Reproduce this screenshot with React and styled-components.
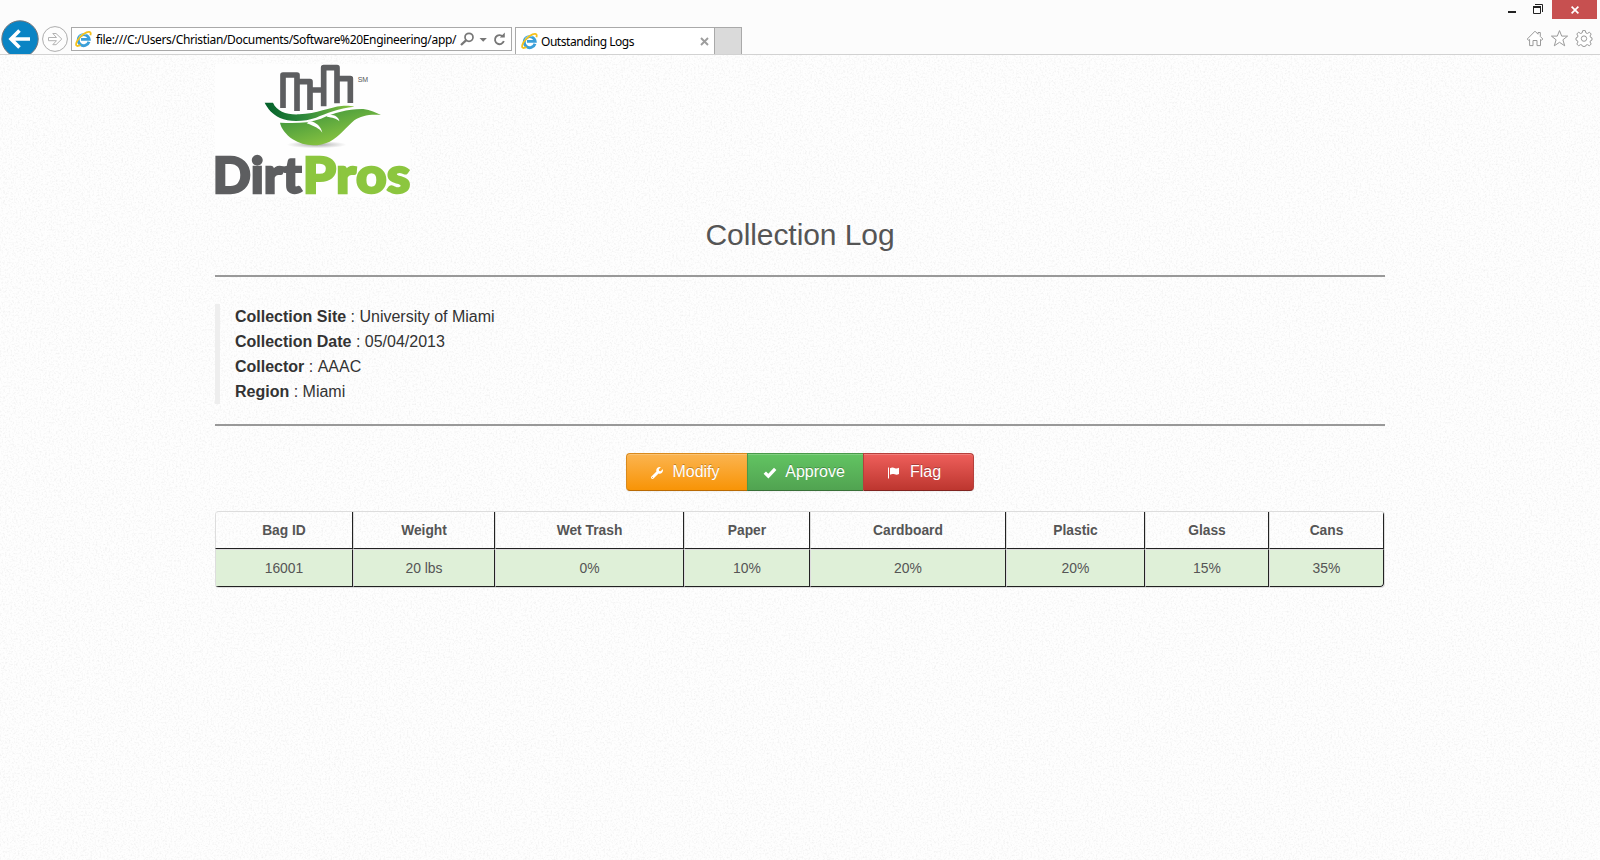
import React from "react";
import styled, { createGlobalStyle } from "styled-components";
import { FaWrench } from "react-icons/fa";

const GlobalStyle = createGlobalStyle`
  * { box-sizing: border-box; }
  body { margin: 0; background: #fdfdfd; overflow: hidden; }
`;

const Window = styled.div`
  width: 1600px;
  height: 860px;
  display: flex;
  flex-direction: column;
  overflow: hidden;
  font-family: "Liberation Sans", Arial, sans-serif;
`;

/* ---------- browser chrome ---------- */

const Chrome = styled.header`
  height: 55px;
  flex: none;
  background: #fcfcfc;
  border-bottom: 1px solid #d2d2d2;
  display: flex;
  align-items: flex-start;
  overflow: hidden;
  font-family: "Noto Sans", "Open Sans", sans-serif;
  font-size: 12px;
  color: #000;
`;

const NavButtons = styled.svg`
  flex: none;
  display: block;
  width: 71px;
  height: 54px;
`;

const AddressBar = styled.div`
  flex: none;
  width: 441px;
  height: 24px;
  margin-top: 27px;
  border: 1px solid #a9a9a9;
  background: #fff;
  display: flex;
  align-items: center;
  padding-left: 3px;
`;

const Url = styled.span`
  flex: none;
  width: 362px;
  margin-left: 4px;
  padding-top: 1px;
  white-space: nowrap;
  line-height: 22px;
  letter-spacing: ${(p) => p.$tracking}px;
`;

const AddressIcons = styled.svg`
  flex: none;
  width: 54px;
  height: 22px;
`;

const Tab = styled.div`
  flex: none;
  width: 200px;
  height: 27px;
  margin: 27px 0 0 3px;
  border: 1px solid #a9a9a9;
  border-bottom: 0;
  background: #fff;
  display: flex;
  align-items: center;
  padding: 0 5px 0 5px;
`;

const TabTitle = styled.span`
  flex: 1;
  margin-left: 3px;
  padding-top: 2px;
  line-height: 24px;
  letter-spacing: ${(p) => p.$tracking}px;
`;

const NewTab = styled.div`
  flex: none;
  width: 27px;
  height: 27px;
  margin-top: 27px;
  background: #dadada;
  border: 1px solid #a9a9a9;
  border-width: 1px 1px 0 0;
`;

const WindowTools = styled.div`
  margin-left: auto;
  width: 100px;
  display: flex;
  flex-direction: column;
`;

const WindowControls = styled.div`
  display: flex;
  height: 19px;
`;

const ControlIcons = styled.svg`
  flex: none;
  width: 52px;
  height: 19px;
`;

const CloseButton = styled.div`
  width: 45px;
  height: 19px;
  background: #c75050;
  display: flex;
  align-items: center;
  justify-content: center;
`;

const ToolIcons = styled.svg`
  width: 100px;
  height: 35px;
`;

const BrandIcon = styled.svg`
  flex: none;
  width: 17px;
  height: 18px;
`;

/* ---------- page ---------- */

const Page = styled.main`
  position: relative;
  flex: 1;
  background: #fefefe;
`;

const Grain = styled.svg`
  position: absolute;
  inset: 0;
  width: 100%;
  height: 100%;
`;

const Container = styled.div`
  position: relative;
  width: 1170px;
  margin: 0 auto;
  padding-top: 9px;
`;

const Logo = styled.svg`
  display: block;
  width: 195px;
  height: 133px;
  background: #fefefe;
  overflow: visible;
`;

const Title = styled.h1`
  margin: 16px 0 0;
  height: 44px;
  line-height: 44px;
  text-align: center;
  font-size: 30px;
  font-weight: 400;
  letter-spacing: ${(p) => p.$tracking}px;
  color: #555;
`;

const Rule = styled.div`
  height: 2px;
  background: #999;
  margin-top: ${(p) => p.$top}px;
`;

const Details = styled.dl`
  margin: 27px 0 0;
  padding-left: 15px;
  border-left: 5px solid #eee;
  color: #333;
  font-size: 16px;
  font-kerning: none;
  line-height: 25px;
`;

const Detail = styled.div`
  height: 25px;
  white-space: pre;
`;

const Term = styled.dt`
  display: inline;
  font-weight: 700;
`;

const Value = styled.dd`
  display: inline;
  margin: 0;
`;

const ButtonGroup = styled.div`
  display: flex;
  justify-content: center;
  margin-top: 27px;
`;

const tones = {
  warning: ["#fbb450", "#f89406", "#d98a1d", "#b96a04"],
  success: ["#62c462", "#51a351", "#4a9a4a", "#387038"],
  danger: ["#ee5f5b", "#bd362f", "#b5403c", "#802420"],
};

const ActionButton = styled.button`
  width: ${(p) => p.$width}px;
  height: 38px;
  padding: 0 ${(p) => p.$inset}px 1px 0;
  display: flex;
  align-items: center;
  justify-content: center;
  gap: ${(p) => p.$gap}px;
  font: 16px "Liberation Sans", Arial, sans-serif;
  color: #fff;
  text-shadow: 0 -1px 0 rgba(0, 0, 0, 0.25);
  background: linear-gradient(${(p) => tones[p.$tone][0]}, ${(p) => tones[p.$tone][1]});
  border: 1px solid ${(p) => tones[p.$tone][2]};
  border-bottom-color: ${(p) => tones[p.$tone][3]};
  border-right-width: ${(p) => (p.$last ? 1 : 0)}px;
  border-radius: ${(p) => (p.$first ? "4px 0 0 4px" : p.$last ? "0 4px 4px 0" : "0")};
  box-shadow: inset 0 1px 0 rgba(255, 255, 255, 0.2), 0 1px 2px rgba(0, 0, 0, 0.05);
  svg { display: block; margin-top: 2px; }
`;

const LogTable = styled.div`
  display: grid;
  grid-template-columns: 138px 142px 189px 126px 196px 139px 124px 115px;
  width: 1170px;
  margin-top: 20px;
  border: 1px solid #ddd;
  border-left-width: 0;
  border-radius: 4px;
  overflow: hidden;
  font-size: 14px;
  color: #555;
`;

const Cell = styled.div`
  height: ${(p) => (p.$head ? 37 : 38)}px;
  line-height: ${(p) => (p.$head ? 37 : 36)}px;
  text-align: center;
  border-left: 1px solid #ddd;
  border-right: 1px solid #222;
  border-bottom: 1px solid #222;
  border-top: ${(p) => (p.$head ? "0" : "1px solid #ddd")};
  font-weight: ${(p) => (p.$head ? 700 : 400)};
  font-size: ${(p) => (p.$head ? 13.8 : 13.9)}px;
  background: ${(p) => (p.$head ? "transparent" : "#dff0d8")};
  background-clip: padding-box;
  &:last-child { border-bottom-right-radius: 4px; }
`;

function IeLogo() {
  return (
    <BrandIcon viewBox="0 0 17 18">
      <path
        d="M14 11.8 A5.5 5.5 0 1 1 14.2 9.4 L6 9.4"
        fill="none"
        stroke="#3a9fd9"
        strokeWidth="2.9"
      />
      <path d="M4 7.6 A5.2 5.2 0 0 1 11.5 4.6" fill="none" stroke="#8fd6f5" strokeWidth="1.2" />
      <path
        d="M15.4 5.2 C16.8 1 13.2 0.8 8.6 4 C3.6 7.6 0 13.2 1.4 15.4 C2 16.4 3.8 16 5.4 15"
        fill="none"
        stroke="#f5c11c"
        strokeWidth="1.8"
      />
    </BrandIcon>
  );
}

function BrowserChrome() {
  return (
    <Chrome>
      <NavButtons viewBox="0 0 71 54">
        <circle cx="20" cy="39" r="18.2" fill="#0a84c4" stroke="#75767a" strokeWidth="1" />
        <path d="M11.5 39H30M19.5 30.5L11 39L19.5 47.5" fill="none" stroke="#fff" strokeWidth="3.6" />
        <circle cx="55" cy="39" r="12.4" fill="#fdfdfd" stroke="#adadad" />
        <path
          d="M48.5 37.5H56.5L52.8 33.5H56L61.8 39L56 44.7H52.8L56.5 40.7H48.5Z"
          fill="#fff"
          stroke="#b2b2b2"
          strokeWidth="1"
        />
      </NavButtons>
      <AddressBar>
        <IeLogo />
        <Url $tracking={-0.34}>file:///C:/Users/Christian/Documents/Software%20Engineering/app/</Url>
        <AddressIcons viewBox="0 0 54 22">
          <g fill="none" stroke="#777">
            <circle cx="11" cy="9.3" r="4" strokeWidth="1.7" />
            <path d="M8 12.3L3 17" strokeWidth="2.3" />
            <path d="M44.8 8.6A4.5 4.5 0 1 0 45.8 13" strokeWidth="1.9" />
          </g>
          <path d="M21.5 10h7.4l-3.7 3.8zM41.8 9.4h5V4.4z" fill="#777" />
        </AddressIcons>
      </AddressBar>
      <Tab>
        <IeLogo />
        <TabTitle $tracking={-0.46}>Outstanding Logs</TabTitle>
        <svg width="9" height="9" viewBox="0 0 9 9">
          <path d="M1 1L8 8M8 1L1 8" stroke="#9d9d9d" strokeWidth="1.9" />
        </svg>
      </Tab>
      <NewTab />
      <WindowTools>
        <WindowControls>
          <ControlIcons viewBox="1500 0 52 19">
            <path d="M1508 12H1516" stroke="#222" strokeWidth="2" />
            <path d="M1535 4.5H1542.5V12" fill="none" stroke="#222" />
            <path d="M1533.5 7H1540.5V13.5H1533.5Z" fill="none" stroke="#222" />
            <path d="M1533 7H1541" stroke="#222" strokeWidth="2" />
          </ControlIcons>
          <CloseButton>
            <svg width="8" height="8" viewBox="0 0 8 8">
              <path d="M0.6 0.6L7.4 7.4M7.4 0.6L0.6 7.4" stroke="#fff" strokeWidth="1.7" />
            </svg>
          </CloseButton>
        </WindowControls>
        <ToolIcons viewBox="1500 19 100 35">
          <g fill="#fff" stroke="#999" strokeWidth="1" strokeLinejoin="round">
            <path d="M1527.3 39L1535 31.2L1538 34.2V32.5H1540.3V36.5L1542.8 39L1541.5 40.3L1540.5 39.5V45.6H1537V40.5H1533V45.6H1529.6V39.5L1528.5 40.3Z" />
            <path d="M1559.5 30.6L1561.7 36.1H1567.6L1562.9 39.8L1564.7 45.8L1559.5 42.3L1554.3 45.8L1556.1 39.8L1551.4 36.1H1557.3Z" />
            <path d="M1582.7 30.6H1585.3L1585.9 32.9L1587.4 33.5L1589.4 32.2L1591.2 34L1590 36L1590.6 37.4L1592 37.9V40.1L1590.6 40.6L1590 42L1591.2 44L1589.4 45.8L1587.4 44.6L1585.9 45.2L1585.3 46.4H1582.7L1582.1 45.2L1580.6 44.6L1578.6 45.8L1576.8 44L1578 42L1577.4 40.6L1576 40.1V37.9L1577.4 37.4L1578 36L1576.8 34L1578.6 32.2L1580.6 33.5L1582.1 32.9Z" />
            <circle cx="1584" cy="38.6" r="2.7" />
          </g>
        </ToolIcons>
      </WindowTools>
    </Chrome>
  );
}

function DirtProsLogo() {
  return (
    <Logo viewBox="45 42 585 399">
      <defs>
        <linearGradient id="stem" x1="0" y1="0" x2="1" y2="0">
          <stop offset="0" stopColor="#03602b" />
          <stop offset="0.45" stopColor="#2f8a3b" />
          <stop offset="1" stopColor="#8cc63f" />
        </linearGradient>
        <linearGradient id="leaf" x1="0" y1="0" x2="0.7" y2="0.9">
          <stop offset="0" stopColor="#2f8c3c" />
          <stop offset="1" stopColor="#8fc740" />
        </linearGradient>
        <radialGradient id="shade">
          <stop offset="0" stopColor="#888" stopOpacity="0.75" />
          <stop offset="1" stopColor="#999" stopOpacity="0" />
        </radialGradient>
      </defs>
      <path
        d="M249 174V75H291V183M291 95H330V180M330 120H371M371 169V53H411V160M411 86H451V159"
        fill="none"
        stroke="#5d5e60"
        strokeWidth="17"
        strokeLinejoin="round"
      />
      <text x="473" y="95" fontSize="21" fontFamily="Liberation Sans, Arial, sans-serif" fill="#555" textLength="31">SM</text>
      <ellipse cx="350" cy="284" rx="90" ry="11" fill="url(#shade)" />
      <path
        d="M240 218C285 220 325 220 363 206C405 188 445 176 490 177C512 180 528 188 543 195C508 192 482 198 463 211C441 229 419 260 389 275C352 292 310 289 278 268C257 253 243 234 240 218Z"
        fill="url(#leaf)"
      />
      <path
        d="M194 158H219C231 185 261 195 298 193C350 191 390 171 425 168C442 167 454 168 463 170C416 174 379 190 348 203C317 214 270 218 240 204C216 192 203 176 194 158Z"
        fill="url(#stem)"
      />
      <path d="M329 213C350 216 363 231 367 248C359 236 344 229 320 220ZM386 194C405 193 417 202 418 214C409 204 397 203 380 200Z" fill="#fff" />
      <g fontFamily="Lato, sans-serif" fontWeight="900" fontSize="151" strokeWidth="7" style={{ fontKerning: "none" }}>
        <text x="38" y="428" textLength="267" lengthAdjust="spacingAndGlyphs" fill="#5d5e60" stroke="#5d5e60">Dirt</text>
        <text x="308" y="428" textLength="323" lengthAdjust="spacingAndGlyphs" fill="#8cc63f" stroke="#8cc63f">Pros</text>
      </g>
    </Logo>
  );
}

const CheckIcon = () => (
  <svg width="14" height="12" viewBox="0 0 14 12">
    <path d="M0.6 6.8L3 4.6L5.3 6.8L11 0.8L13.4 3L5.4 11.4Z" fill="#fff" />
  </svg>
);

const FlagIcon = () => (
  <svg width="12" height="12" viewBox="0 0 12 12">
    <path d="M0.5 0.5V11.5" stroke="#fff" strokeWidth="1" />
    <path d="M2 1.2C4 0 5.5 0.6 7 1.3C8.4 1.8 9.6 1.5 11 0.8V7C9.6 7.8 8.2 8 6.6 7.3C5 6.6 3.6 6.8 2 7.8Z" fill="#fff" />
  </svg>
);

const details = [
  ["Collection Site", "University of Miami"],
  ["Collection Date", "05/04/2013"],
  ["Collector", "AAAC"],
  ["Region", "Miami"],
];

const columns = ["Bag ID", "Weight", "Wet Trash", "Paper", "Cardboard", "Plastic", "Glass", "Cans"];
const bag = ["16001", "20 lbs", "0%", "10%", "20%", "20%", "15%", "35%"];

export default function App() {
  return (
    <Window>
      <GlobalStyle />
      <BrowserChrome />
      <Page>
        <Grain>
          <filter id="grain" x="0" y="0" width="100%" height="100%">
            <feTurbulence type="fractalNoise" baseFrequency="0.55" numOctaves="3" seed="4" />
            <feColorMatrix values="0 0 0 0 0.5  0 0 0 0 0.5  0 0 0 0 0.5  0.45 0 0 0 -0.205" />
          </filter>
          <rect width="100%" height="100%" filter="url(#grain)" />
        </Grain>
        <Container>
          <DirtProsLogo />
          <Title $tracking={-0.07}>Collection Log</Title>
          <Rule $top={18} />
          <Details>
            {details.map(([term, value]) => (
              <Detail key={term}>
                <Term>{term}</Term>
                <Value>{" : " + value}</Value>
              </Detail>
            ))}
          </Details>
          <Rule $top={20} />
          <ButtonGroup>
            <ActionButton $tone="warning" $width={121} $gap={9} $inset={3} $first>
              <FaWrench size={12} />
              Modify
            </ActionButton>
            <ActionButton $tone="success" $width={116} $gap={8} $inset={3}>
              <CheckIcon />
              Approve
            </ActionButton>
            <ActionButton $tone="danger" $width={111} $gap={10} $inset={8} $last>
              <FlagIcon />
              Flag
            </ActionButton>
          </ButtonGroup>
          <LogTable>
            {columns.map((name) => (
              <Cell key={name} $head>{name}</Cell>
            ))}
            {bag.map((value, i) => (
              <Cell key={i}>{value}</Cell>
            ))}
          </LogTable>
        </Container>
      </Page>
    </Window>
  );
}
